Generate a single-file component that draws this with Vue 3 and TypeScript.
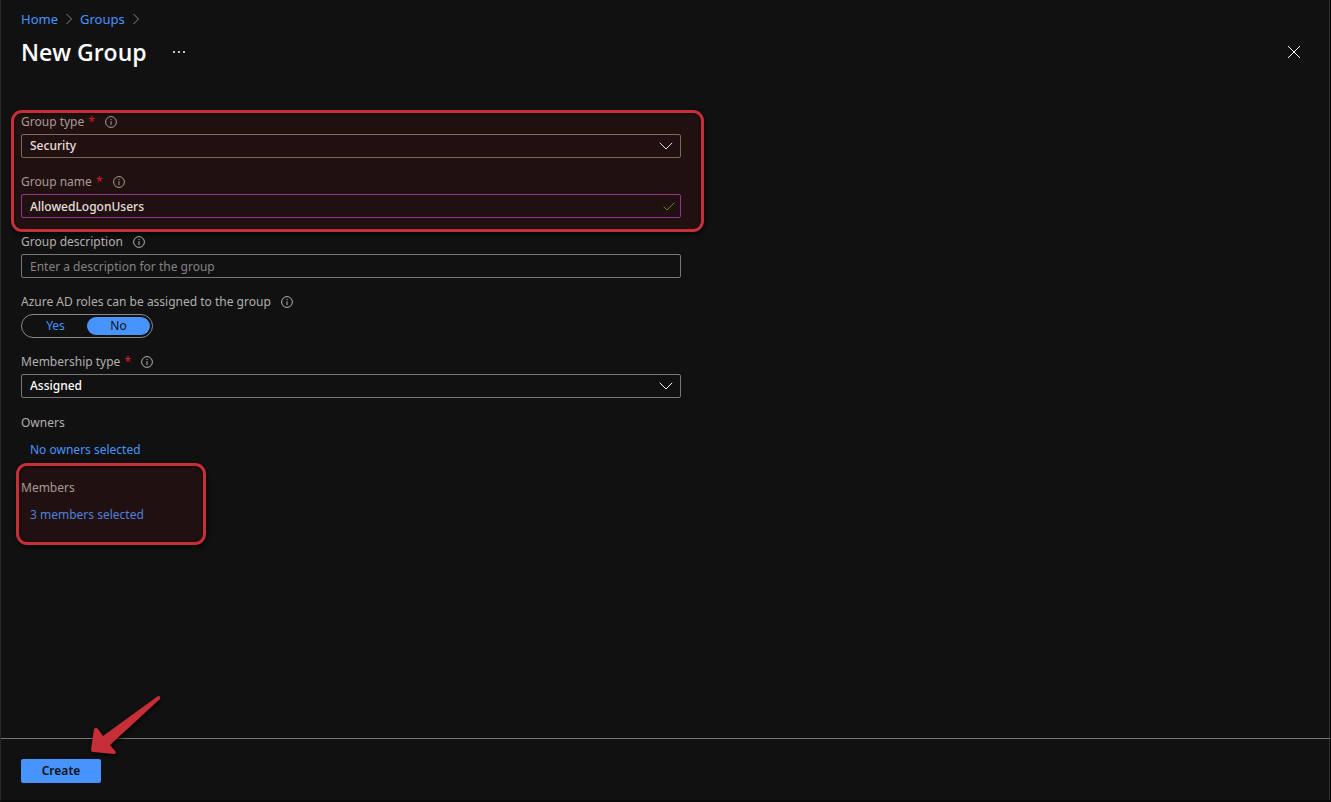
<script setup lang="ts">
import { ref } from 'vue'

const groupType = ref('Security')
const groupName = ref('AllowedLogonUsers')
const description = ref('')
const rolesAssignable = ref<'Yes' | 'No'>('No')
const membershipType = ref('Assigned')
const choices: Array<'Yes' | 'No'> = ['Yes', 'No']
</script>

<template>
  <div class="blade">
    <header class="head">
      <nav class="crumbs" aria-label="Breadcrumb">
        <a href="#home">Home</a>
        <svg class="sep" viewBox="0 0 6 12" aria-hidden="true"><path d="M.5 1 5.5 6 .5 11" /></svg>
        <a href="#groups">Groups</a>
        <svg class="sep" viewBox="0 0 6 12" aria-hidden="true"><path d="M.5 1 5.5 6 .5 11" /></svg>
      </nav>
      <div class="title-row">
        <h1>New Group</h1>
        <button class="more" type="button" aria-label="More actions">
          <svg viewBox="0 0 12 2" aria-hidden="true"><path d="M0 0h2v2H0zM5 0h2v2H5zM10 0h2v2h-2z" /></svg>
        </button>
        <button class="close" type="button" aria-label="Close">
          <svg viewBox="0 0 14 14" aria-hidden="true"><path d="M1 1 13 13M13 1 1 13" /></svg>
        </button>
      </div>
    </header>

    <main class="form">
      <section class="marked marked-fields">
        <div class="field">
          <div class="label-row">
            <label for="group-type">Group type <span class="req">*</span></label>
            <svg class="info" viewBox="0 0 12 12" aria-hidden="true"><circle cx="6" cy="6" r="5.4" /><path d="M6 5.2V9M6 3v1.1" /></svg>
          </div>
          <div class="control">
            <select id="group-type" v-model="groupType">
              <option>Security</option>
              <option>Microsoft 365</option>
            </select>
            <svg class="chevron" viewBox="0 0 14 8" aria-hidden="true"><path d="M.8.8 7 7 13.2.8" /></svg>
          </div>
        </div>
        <div class="field">
          <div class="label-row">
            <label for="group-name">Group name <span class="req">*</span></label>
            <svg class="info" viewBox="0 0 12 12" aria-hidden="true"><circle cx="6" cy="6" r="5.4" /><path d="M6 5.2V9M6 3v1.1" /></svg>
          </div>
          <div class="control">
            <input id="group-name" v-model="groupName" class="edited" type="text" />
            <svg class="check" viewBox="0 0 12 9" aria-hidden="true"><path d="M.6 4.6 4 8 11.4.7" /></svg>
          </div>
        </div>
      </section>

      <div class="field">
        <div class="label-row">
          <label for="group-description">Group description</label>
          <svg class="info" viewBox="0 0 12 12" aria-hidden="true"><circle cx="6" cy="6" r="5.4" /><path d="M6 5.2V9M6 3v1.1" /></svg>
        </div>
        <div class="control">
          <input id="group-description" v-model="description" type="text" placeholder="Enter a description for the group" />
        </div>
      </div>

      <div class="field" role="radiogroup" aria-labelledby="roles-label">
        <div class="label-row">
          <span id="roles-label">Azure AD roles can be assigned to the group</span>
          <svg class="info" viewBox="0 0 12 12" aria-hidden="true"><circle cx="6" cy="6" r="5.4" /><path d="M6 5.2V9M6 3v1.1" /></svg>
        </div>
        <div class="toggle">
          <label v-for="choice in choices" :key="choice">
            <input v-model="rolesAssignable" type="radio" name="roles" :value="choice" />
            <span>{{ choice }}</span>
          </label>
        </div>
      </div>

      <div class="field">
        <div class="label-row">
          <label for="membership-type">Membership type <span class="req">*</span></label>
          <svg class="info" viewBox="0 0 12 12" aria-hidden="true"><circle cx="6" cy="6" r="5.4" /><path d="M6 5.2V9M6 3v1.1" /></svg>
        </div>
        <div class="control">
          <select id="membership-type" v-model="membershipType">
            <option>Assigned</option>
            <option>Dynamic User</option>
          </select>
          <svg class="chevron" viewBox="0 0 14 8" aria-hidden="true"><path d="M.8.8 7 7 13.2.8" /></svg>
        </div>
      </div>

      <section class="people">
        <h2>Owners</h2>
        <a href="#owners">No owners selected</a>
      </section>
      <section class="people marked marked-members">
        <h2>Members</h2>
        <a href="#members">3 members selected</a>
      </section>
    </main>

    <footer class="foot">
      <button class="create" type="button">Create</button>
      <svg class="arrow" viewBox="0 0 80 70" aria-hidden="true">
        <path d="M74 6Q76 7 75 9L25 55 31 62Q31 64 29 64L8 62Q6 62 6 60L9 39Q11 37 13 39L18 46 73 6Z" />
      </svg>
    </footer>
  </div>
</template>

<style>
html,
body {
  background: #111;
}
</style>

<style scoped>
.blade {
  box-sizing: border-box;
  display: flex;
  flex-direction: column;
  min-height: 100vh;
  border-left: 1px solid #292929;
  border-right: 1px solid #000;
  border-bottom: 2px solid #090909;
  box-shadow: inset -1px 0 #303030;
  background: #111;
  color: #b3b0ad;
  font: 12px/20px "Noto Sans", "Open Sans", sans-serif;
}
a {
  color: #4894fe;
  text-decoration: none;
}
button,
input,
select {
  font: inherit;
}
svg {
  fill: none;
  stroke: currentColor;
}
.head {
  padding: 9px 29px 0 20px;
}
.crumbs {
  display: flex;
  align-items: center;
  gap: 8px;
  font-size: 13px;
}
.sep {
  width: 6px;
  height: 12px;
  color: #8a8886;
}
.title-row {
  display: flex;
  align-items: center;
  height: 46px;
}
h1 {
  margin: 0;
  color: #fff;
  font-family: "Open Sans", "Noto Sans", sans-serif;
  font-size: 23px;
  line-height: 32px;
  font-weight: 600;
}
.more,
.close {
  display: flex;
  padding: 0;
  border: 0;
  background: none;
  color: #fff;
}
.more {
  margin-left: 26px;
  color: #c8c6c4;
}
.more svg {
  width: 12px;
  height: 2px;
  fill: currentColor;
  stroke: none;
}
.close {
  margin-left: auto;
}
.close svg {
  width: 14px;
  height: 14px;
}
.form {
  flex: 1;
  max-width: 660px;
  padding: 39px 20px 24px;
}
.field {
  padding-bottom: 16px;
}
.label-row {
  display: flex;
  align-items: center;
  gap: 10px;
  height: 20px;
}
.label-row > label,
.label-row > span {
  line-height: 16px;
  margin-bottom: 4px;
}
.req {
  margin-left: 1px;
  color: #e01b2e;
}
.info {
  width: 12px;
  height: 12px;
  margin-bottom: 4px;
}
.control {
  position: relative;
}
.control select,
.control input {
  display: block;
  box-sizing: border-box;
  width: 100%;
  height: 24px;
  padding: 0 8px;
  border: 1px solid #797775;
  border-radius: 2px;
  outline: 0;
  appearance: none;
  background: transparent;
  color: #fff;
}
.control select,
.control .edited {
  font-weight: 500;
}
.control option {
  background: #111;
}
.control input::placeholder {
  color: #858381;
  opacity: 1;
}
.control .edited {
  border-color: #9a35b0;
}
.chevron,
.check {
  position: absolute;
  top: 8px;
  pointer-events: none;
}
.chevron {
  right: 8px;
  width: 14px;
  height: 8px;
  color: #fff;
}
.check {
  right: 6px;
  width: 12px;
  height: 9px;
  color: #57a300;
}
.toggle {
  display: inline-flex;
  box-sizing: border-box;
  height: 24px;
  padding: 2px;
  border: 1px solid #8a8886;
  border-radius: 12px;
  vertical-align: top;
}
.toggle label {
  position: relative;
  display: flex;
}
.toggle input {
  position: absolute;
  inset: 0;
  margin: 0;
  opacity: 0;
}
.toggle span {
  width: 63px;
  border-radius: 9px;
  color: #4894fe;
  line-height: 18px;
  text-align: center;
}
.toggle input:checked + span {
  background: #4894fe;
  color: #111;
}
.people {
  height: 65px;
}
.people h2 {
  margin: 0 0 8px;
  font-size: 12px;
  line-height: 18px;
  font-weight: 400;
}
.people a {
  display: inline-block;
  margin-left: 9px;
}
.marked {
  position: relative;
}
.marked::after {
  content: "";
  position: absolute;
  box-sizing: border-box;
  border: 3px solid #c62f38;
  border-radius: 11px;
  background: rgba(120, 17, 16, 0.15);
  box-shadow: 1px 2px 4px rgba(0, 0, 0, 0.8), inset 0 1px 3px rgba(0, 0, 0, 0.7);
  pointer-events: none;
}
.marked-fields::after {
  inset: -4px -23px 2px -10px;
}
.marked-members::after {
  top: -16px;
  left: -5px;
  width: 190px;
  height: 82px;
}
.foot {
  position: relative;
  padding: 20px 20px 17px;
  border-top: 1px solid #797775;
}
.create {
  display: block;
  width: 80px;
  height: 24px;
  padding: 0;
  border: 0;
  border-radius: 2px;
  background: #4894fe;
  color: #111;
  font-weight: 600;
}
.arrow {
  position: absolute;
  top: -49px;
  left: 84px;
  width: 80px;
  height: 70px;
  fill: #c62f38;
  stroke: none;
  filter: drop-shadow(1px 2px 2px rgba(0, 0, 0, 0.8));
}
</style>
